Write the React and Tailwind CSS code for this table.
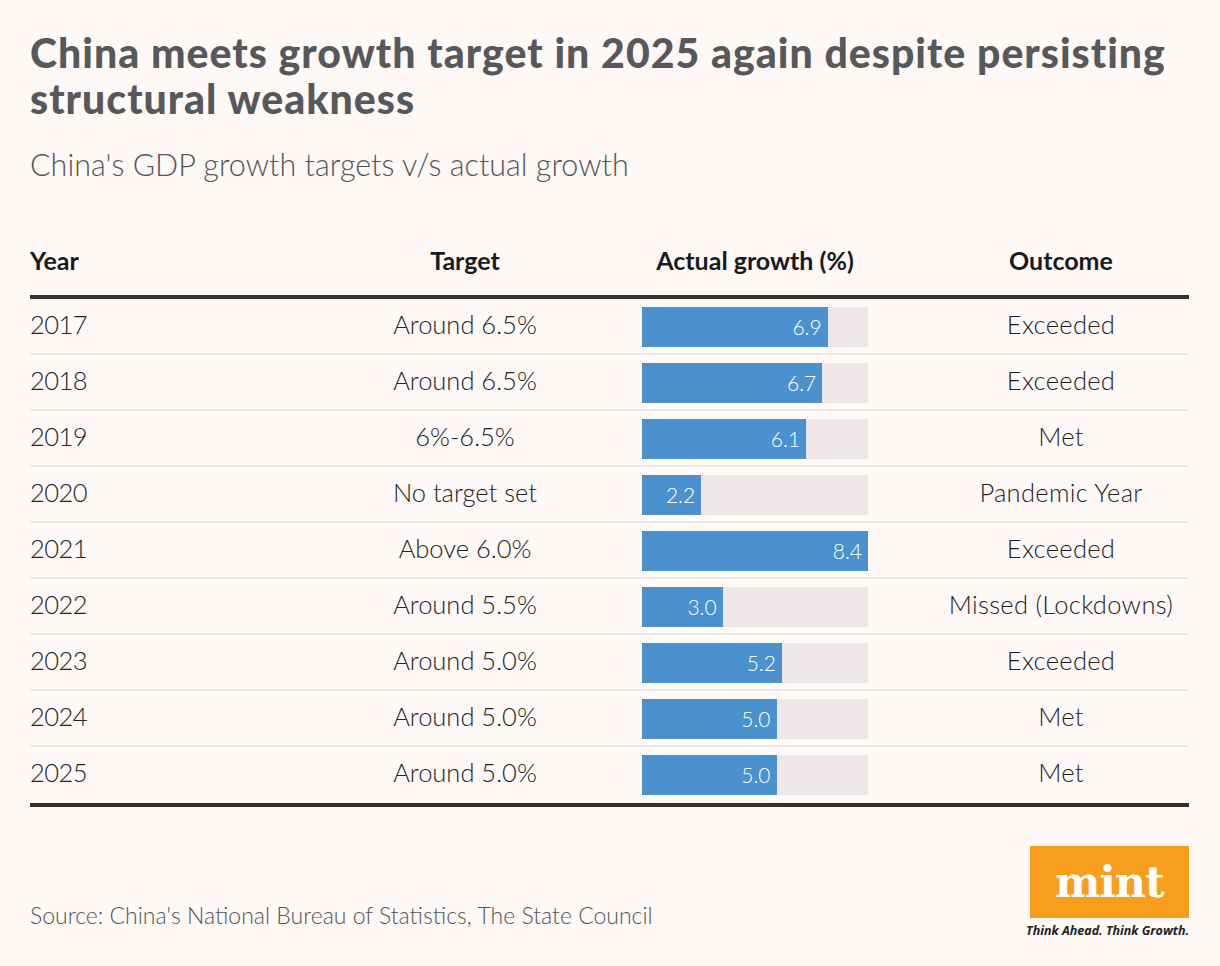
import React from "react";

const rows = [
  ["2017", "Around 6.5%", 6.9, "Exceeded"],
  ["2018", "Around 6.5%", 6.7, "Exceeded"],
  ["2019", "6%-6.5%", 6.1, "Met"],
  ["2020", "No target set", 2.2, "Pandemic Year"],
  ["2021", "Above 6.0%", 8.4, "Exceeded"],
  ["2022", "Around 5.5%", 3.0, "Missed (Lockdowns)"],
  ["2023", "Around 5.0%", 5.2, "Exceeded"],
  ["2024", "Around 5.0%", 5.0, "Met"],
  ["2025", "Around 5.0%", 5.0, "Met"],
];

export default function App() {
  return (
    <div
      className="w-[1220px] h-[966px] bg-[#fef8f7] px-[30px] pt-[30px] text-[#222] overflow-hidden"
      style={{ fontFamily: "Lato, 'Open Sans', sans-serif" }}
    >
      <h1 className="text-[41px] leading-[46px] font-black text-[#58585a] tracking-[1px] w-[1180px]">
        China meets growth target in 2025 again despite persisting
        <br />
        structural weakness
      </h1>
      <p className="mt-[24px] text-[30.5px] leading-[36px] font-light text-[#555]">
        China's GDP growth targets v/s actual growth
      </p>

      <div className="mt-[59px] w-[1159px]">
        <div className="grid grid-cols-[310px_250px_52px_226px_65px_256px] items-center h-[40px] text-[25px] font-bold text-[#1a1a1a]">
          <div>Year</div>
          <div className="text-center">Target</div>
          <div />
          <div className="text-center whitespace-nowrap">Actual growth (%)</div>
          <div />
          <div className="text-center">Outcome</div>
        </div>
        <div className="mt-[14px] h-[4px] bg-[#333]" />
        {rows.map(([year, target, val, outcome], i) => (
          <div
            key={year}
            className={
              "grid grid-cols-[310px_250px_52px_226px_65px_256px] h-[56px] pt-[8px] text-[25.5px] font-light text-[#222] " +
              (i < rows.length - 1 ? "border-b-2 border-[#ede6e5]" : "")
            }
          >
            <div className="leading-[34px] tracking-[-0.5px]">{year}</div>
            <div className="leading-[34px] text-center">{target}</div>
            <div />
            <div className="h-[40px] bg-[#ece7e6] flex">
              <div
                className="h-full bg-[#4a91cd] flex items-center justify-end pr-[6px] text-[21px] text-white"
                style={{ width: `${(val / 8.4) * 226}px` }}
              >
                {val.toFixed(1)}
              </div>
            </div>
            <div />
            <div className="leading-[34px] text-center whitespace-nowrap tracking-[0.3px]">{outcome}</div>
          </div>
        ))}
        <div className="h-[4px] bg-[#333]" />
      </div>

      <div className="mt-[39px] flex items-end justify-between w-[1159px]">
        <p className="mb-[8px] text-[23px] font-light text-[#555]">
          Source: China's National Bureau of Statistics, The State Council
        </p>
        <div className="flex flex-col items-end">
          <div className="w-[159px] h-[72px] bg-[#f99d1c] flex items-center justify-center">
            <span
              className="text-white text-[43px] font-bold leading-none tracking-[-1px]"
              style={{ fontFamily: "'DejaVu Serif', 'Liberation Serif', serif" }}
            >
              mint
            </span>
          </div>
          <div className="mt-[4px] text-[12.5px] italic font-bold text-[#222] whitespace-nowrap" style={{ fontFamily: "'Open Sans', sans-serif" }}>
            Think Ahead. Think Growth.
          </div>
        </div>
      </div>
    </div>
  );
}
